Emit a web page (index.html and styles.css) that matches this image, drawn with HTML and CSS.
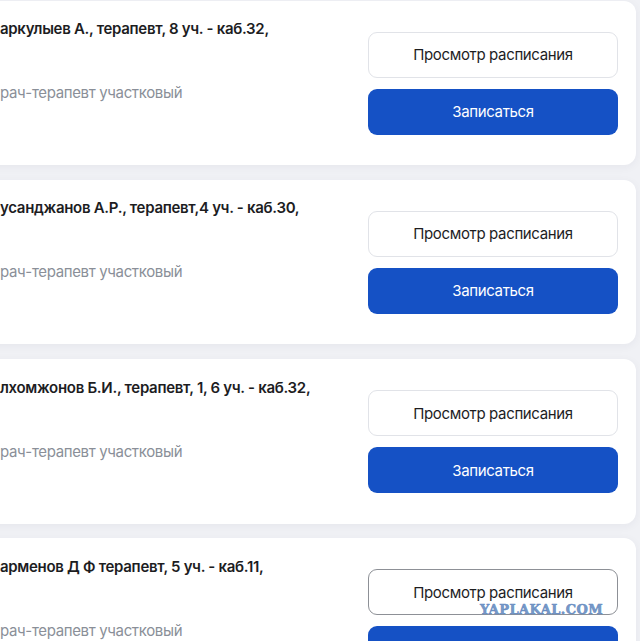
FILE: index.html
```html
<!DOCTYPE html>
<html lang="ru">
<head>
<meta charset="utf-8">
<title>Врачи</title>
<link rel="stylesheet" href="styles.css">
</head>
<body>
<div class="list">
  <div class="card">
    <div class="info">
      <div class="name">аркулыев А., терапевт, 8 уч. - каб.32,</div>
      <div class="role">рач-терапевт участковый</div>
    </div>
    <div class="actions">
      <button class="btn btn-outline">Просмотр расписания</button>
      <button class="btn btn-primary">Записаться</button>
    </div>
  </div>
  <div class="card">
    <div class="info">
      <div class="name">усанджанов А.Р., терапевт,4 уч. - каб.30,</div>
      <div class="role">рач-терапевт участковый</div>
    </div>
    <div class="actions">
      <button class="btn btn-outline">Просмотр расписания</button>
      <button class="btn btn-primary">Записаться</button>
    </div>
  </div>
  <div class="card">
    <div class="info">
      <div class="name">лхомжонов Б.И., терапевт, 1, 6 уч. - каб.32,</div>
      <div class="role">рач-терапевт участковый</div>
    </div>
    <div class="actions">
      <button class="btn btn-outline">Просмотр расписания</button>
      <button class="btn btn-primary">Записаться</button>
    </div>
  </div>
  <div class="card">
    <div class="info">
      <div class="name">арменов Д Ф терапевт, 5 уч. - каб.11,</div>
      <div class="role">рач-терапевт участковый</div>
    </div>
    <div class="actions">
      <button class="btn btn-outline btn-focus">Просмотр расписания</button>
      <button class="btn btn-primary">Записаться</button>
    </div>
  </div>
</div>
<div class="watermark">YAPLAKAL.COM</div>
</body>
</html>
```

FILE: styles.css
```css
html, body {
  margin: 0;
  padding: 0;
  height: 100%;
  overflow: hidden;
}

body {
  background: #f0f1f5;
  font-family: Inter, "Noto Sans", sans-serif;
  color: #1d1d1f;
  position: relative;
}

.list {
  display: flex;
  flex-direction: column;
  gap: 14.83px;
  margin: 0.5px 4px 0 -30px;
}

.card {
  display: flex;
  justify-content: space-between;
  background: #fff;
  border-radius: 12px;
  padding: 31px 18px 30.5px 30px;
  box-shadow: 0 2px 10px rgba(30, 40, 70, 0.05);
}

.info {
  margin-top: -12.5px;
}

.name {
  font-size: 15px;
  line-height: 20px;
  font-weight: 600;
  letter-spacing: -0.3px;
}

.role {
  margin-top: 44px;
  font-size: 15px;
  line-height: 20px;
  color: #8a8f98;
  letter-spacing: -0.35px;
}

.actions {
  display: flex;
  flex-direction: column;
  gap: 11px;
  width: 250px;
}

.btn {
  height: 46px;
  border-radius: 9px;
  font-family: Inter, "Noto Sans", sans-serif;
  font-size: 15px;
  letter-spacing: -0.35px;
  cursor: pointer;
}

.btn-outline {
  background: #fff;
  color: #1d1d1f;
  border: 1px solid #e1e3e8;
}

.btn-focus {
  border-color: #8d9096;
}

.btn-primary {
  background: #1551c5;
  color: #fff;
  border: none;
}

/* site stamp in the lower right corner */
.watermark {
  position: absolute;
  left: 480px;
  top: 603px;
  font-family: "DejaVu Serif", serif;
  font-weight: bold;
  font-size: 13px;
  line-height: 13px;
  letter-spacing: 0.4px;
  color: rgba(100, 138, 192, 0.9);
  -webkit-text-stroke: 0.6px rgba(100, 138, 192, 0.9);
}
```
